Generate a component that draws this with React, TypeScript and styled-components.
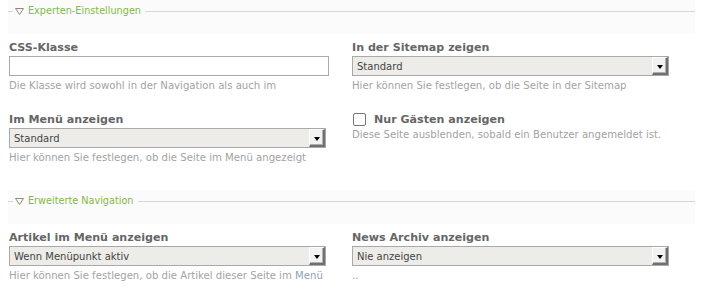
import styled, { createGlobalStyle } from "styled-components";

const Global = createGlobalStyle`
  body {
    margin: 0;
    background: #fff;
    font-family: "DejaVu Sans", Verdana, sans-serif;
  }
`;

export default function App() {
  return (
    <>
      <Global />
      <Page>
        <Legend title="Experten-Einstellungen" />
        <Grid>
          <Field>
            <Label>CSS-Klasse</Label>
            <TextInput />
            <Help>Die Klasse wird sowohl in der Navigation als auch im</Help>
          </Field>
          <Field>
            <Label>In der Sitemap zeigen</Label>
            <Select value="Standard" />
            <Help>Hier können Sie festlegen, ob die Seite in der Sitemap</Help>
          </Field>
          <Field>
            <Label>Im Menü anzeigen</Label>
            <Select value="Standard" />
            <Help>Hier können Sie festlegen, ob die Seite im Menü angezeigt</Help>
          </Field>
          <Field>
            <CheckRow>
              <Box />
              <Label>Nur Gästen anzeigen</Label>
            </CheckRow>
            <Help $tight>Diese Seite ausblenden, sobald ein Benutzer angemeldet ist.</Help>
          </Field>
        </Grid>
        <Legend title="Erweiterte Navigation" $gap={22} />
        <Grid>
          <Field>
            <Label>Artikel im Menü anzeigen</Label>
            <Select value="Wenn Menüpunkt aktiv" />
            <Help>
              Hier können Sie festlegen, ob die Artikel dieser Seite im <Link>Menü</Link>
            </Help>
          </Field>
          <Field>
            <Label>News Archiv anzeigen</Label>
            <Select value="Nie anzeigen" />
            <Help>
              <Link>..</Link>
            </Help>
          </Field>
        </Grid>
      </Page>
    </>
  );
}

function Legend({ title, $gap }: { title: string; $gap?: number }) {
  return (
    <Head $gap={$gap}>
      <Dash />
      <Tri viewBox="0 0 9 7" width="9" height="7">
        <path d="M0.5 0.5 H8.5 L4.5 6.5 Z" fill="none" stroke="#8a8a8a" strokeWidth="1" />
      </Tri>
      <HeadText>{title}</HeadText>
      <Rule />
    </Head>
  );
}

function Select({ value }: { value: string }) {
  return (
    <SelectBox>
      <SelectText>{value}</SelectText>
      <Arrow>
        <ArrowTri />
      </Arrow>
    </SelectBox>
  );
}

const Page = styled.div`
  width: 706px;
`;

const Head = styled.div<{ $gap?: number }>`
  display: flex;
  align-items: flex-start;
  margin: ${(p) => p.$gap ?? 0}px 11px 5px 8px;
  height: 34px;
  background: #fbfbfb;
`;

const Dash = styled.div`
  width: 5px;
  height: 1px;
  margin-top: 11px;
  background: #d6d6d6;
`;

const Tri = styled.svg`
  margin: 8px 4px 0 2px;
`;

const HeadText = styled.span`
  font-size: 9.7px;
  line-height: 14px;
  margin-top: 4px;
  color: #84b84a;
  padding-right: 4px;
`;

const Rule = styled.div`
  flex: 1;
  height: 1px;
  margin-top: 11px;
  background: #d6d6d6;
`;

const Grid = styled.div`
  display: grid;
  grid-template-columns: 343px 320px;
  row-gap: 15px;
  padding-left: 9px;
`;

const Field = styled.div`
  display: flex;
  flex-direction: column;
  align-items: flex-start;
`;

const Label = styled.div`
  font-size: 11.1px;
  font-weight: bold;
  line-height: 17px;
  color: #666;
`;

const TextInput = styled.div`
  box-sizing: border-box;
  width: 320px;
  height: 20px;
  border: 1px solid #aaa;
  background: #fff;
`;

const SelectBox = styled.div`
  box-sizing: border-box;
  display: flex;
  align-items: center;
  width: 317px;
  height: 20px;
  border: 1px solid #a9a9a9;
  background: #edece9;
`;

const SelectText = styled.span`
  flex: 1;
  padding-left: 4px;
  font-size: 10px;
  color: #444;
`;

const Arrow = styled.div`
  box-sizing: border-box;
  display: flex;
  align-items: center;
  justify-content: center;
  width: 16px;
  height: 18px;
  background: #f2f2f2;
  border-top: 1px solid #fff;
  border-left: 1px solid #fff;
  border-right: 2px solid #707070;
  border-bottom: 2px solid #707070;
  box-shadow: inset -1px -1px 0 #b0b0b0;
`;

const ArrowTri = styled.div`
  width: 0;
  height: 0;
  border-left: 3.5px solid transparent;
  border-right: 3.5px solid transparent;
  border-top: 4px solid #000;
  margin-top: 2px;
`;

const Help = styled.div<{ $tight?: boolean }>`
  font-size: 10.15px;
  line-height: ${(p) => (p.$tight ? "14px" : "20px")};
  color: #a3a3a3;
  white-space: nowrap;
`;

const Link = styled.span`
  color: #8fa3bb;
`;

const CheckRow = styled.div`
  display: flex;
  align-items: center;
  gap: 8px;
`;

const Box = styled.div`
  box-sizing: border-box;
  width: 13px;
  height: 13px;
  margin-left: 1px;
  border: 1px solid #777;
  border-radius: 2px;
  background: #fff;
`;
